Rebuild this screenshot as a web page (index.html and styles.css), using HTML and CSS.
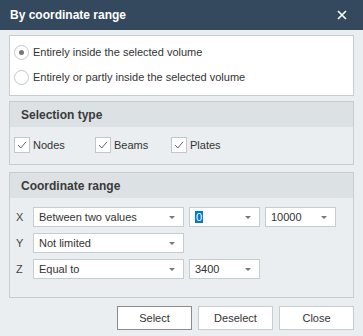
FILE: index.html
```html
<!DOCTYPE html>
<html lang="en">
  <head>
    <meta charset="UTF-8" />
    <meta name="viewport" content="width=device-width, initial-scale=1.0" />
    <title>By coordinate range</title>
    <link rel="stylesheet" href="styles.css">
  </head>
  <body>
    <div class="dialog">
      <div class="titlebar">
        <span class="title">By coordinate range</span>
        <svg class="close" width="10" height="10" viewBox="0 0 10 10">
          <path d="M1 1 L9 9 M9 1 L1 9" stroke="#fff" stroke-width="1.6" fill="none" />
        </svg>
      </div>

      <div class="content">
        <div class="box radios">
          <label class="radio-row"><span class="radio checked"></span>Entirely inside the selected volume</label>
          <label class="radio-row"><span class="radio"></span>Entirely or partly inside the selected volume</label>
        </div>

        <div class="group sel-type">
          <div class="group-head">Selection type</div>
          <div class="checks">
            <label class="check"><span class="box-check">
              <svg width="10" height="8" viewBox="0 0 10 8"><path d="M1 4 L3.8 7 L9 0.8" stroke="#666" stroke-width="1" fill="none" /></svg>
            </span>Nodes</label>
            <label class="check"><span class="box-check">
              <svg width="10" height="8" viewBox="0 0 10 8"><path d="M1 4 L3.8 7 L9 0.8" stroke="#666" stroke-width="1" fill="none" /></svg>
            </span>Beams</label>
            <label class="check"><span class="box-check">
              <svg width="10" height="8" viewBox="0 0 10 8"><path d="M1 4 L3.8 7 L9 0.8" stroke="#666" stroke-width="1" fill="none" /></svg>
            </span>Plates</label>
          </div>
        </div>

        <div class="group coords">
          <div class="group-head">Coordinate range</div>
          <div class="rows">
            <div class="row">
              <span class="axis">X</span>
              <div class="combo wide">Between two values<span class="arrow"></span></div>
              <div class="combo"><span class="selected">0</span><span class="arrow"></span></div>
              <div class="combo">10000<span class="arrow"></span></div>
            </div>
            <div class="row">
              <span class="axis">Y</span>
              <div class="combo wide">Not limited<span class="arrow"></span></div>
            </div>
            <div class="row">
              <span class="axis">Z</span>
              <div class="combo wide">Equal to<span class="arrow"></span></div>
              <div class="combo">3400<span class="arrow"></span></div>
            </div>
          </div>
        </div>

        <div class="buttons">
          <button class="btn default">Select</button>
          <button class="btn">Deselect</button>
          <button class="btn">Close</button>
        </div>
      </div>
    </div>
  </body>
</html>
```

FILE: styles.css
```css
* {
  box-sizing: border-box;
}

body {
  margin: 0;
  font-family: "Liberation Sans", Arial, sans-serif;
  font-size: 11px;
  color: #333;
  background-color: #ebeef0;
}

.titlebar {
  height: 30px;
  background-color: #34495e;
  display: flex;
  align-items: center;
  justify-content: space-between;
  padding: 0 16px 0 10px;
}

.title {
  color: #fff;
  font-weight: bold;
  font-size: 12px;
}

.content {
  padding: 5px 9px 0 9px;
  display: flex;
  flex-direction: column;
}

.box {
  background: #fff;
  border: 1px solid #c5cdcf;
}

.radios {
  height: 61px;
  padding: 6px 4px 0 4px;
  display: flex;
  flex-direction: column;
  gap: 5px;
}

.radio-row {
  display: flex;
  align-items: center;
  height: 20px;
}

.radio {
  width: 15px;
  height: 15px;
  border: 1px solid #c2c8ca;
  border-radius: 50%;
  margin-right: 4px;
  display: flex;
  align-items: center;
  justify-content: center;
  background: #fff;
}

.radio.checked::after {
  content: "";
  width: 5px;
  height: 5px;
  border-radius: 50%;
  background: #777;
}

.group {
  border: 1px solid #c5cdcf;
}

.sel-type {
  margin-top: 5px;
  height: 64px;
}

.coords {
  margin-top: 7px;
  height: 126px;
}

.group-head {
  height: 25px;
  background-color: #dce1e3;
  font-weight: bold;
  font-size: 12px;
  color: #3a3a3a;
  display: flex;
  align-items: center;
  padding-left: 11px;
}

.checks {
  display: grid;
  grid-template-columns: 81px 76px auto;
  padding: 10px 4px 0 4px;
}

.check {
  display: flex;
  align-items: center;
  height: 16px;
}

.box-check {
  width: 16px;
  height: 16px;
  border: 1px solid #c2c8ca;
  background: #fff;
  display: flex;
  align-items: center;
  justify-content: center;
  margin-right: 3px;
}

.rows {
  padding: 9px 0 0 0;
  display: flex;
  flex-direction: column;
  gap: 6px;
}

.row {
  display: flex;
  align-items: center;
  gap: 5px;
}

.axis {
  width: 18px;
  padding-left: 6px;
  color: #444;
}

.combo {
  position: relative;
  width: 71px;
  height: 20px;
  background: #fff;
  border: 1px solid #c5cdcf;
  display: flex;
  align-items: center;
  padding-left: 5px;
}

.combo.wide {
  width: 151px;
}

.arrow {
  position: absolute;
  right: 8px;
  top: 8px;
  width: 0;
  height: 0;
  border-left: 3.5px solid transparent;
  border-right: 3.5px solid transparent;
  border-top: 3.5px solid #777;
}

.selected {
  background: #0078d7;
  color: #fff;
  padding: 0 1px;
}

.buttons {
  display: flex;
  justify-content: flex-end;
  gap: 6px;
  margin-top: 8px;
}

.btn {
  width: 75px;
  height: 24px;
  background: #fff;
  border: 1px solid #c5cdcf;
  font-family: "Liberation Sans", Arial, sans-serif;
  font-size: 11px;
  color: #333;
  padding: 0;
}

.btn.default {
  border-color: #8c8c8c;
}
```
